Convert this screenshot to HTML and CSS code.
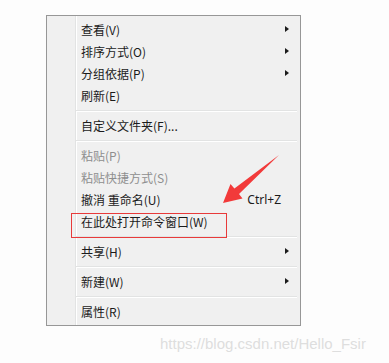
FILE: index.html
```html
<!DOCTYPE html>
<html lang="zh-CN">
<head>
    <meta charset="UTF-8">
    <title>右键菜单</title>
    <link rel="stylesheet" href="styles.css">
</head>
<body>
    <div class="screen">
        <div class="menu">
            <div class="item"><span>查看(V)</span><span class="sub"></span></div>
            <div class="item"><span>排序方式(O)</span><span class="sub"></span></div>
            <div class="item"><span>分组依据(P)</span><span class="sub"></span></div>
            <div class="item"><span>刷新(E)</span></div>
            <div class="sep"></div>
            <div class="item"><span>自定义文件夹(F)...</span></div>
            <div class="sep"></div>
            <div class="item disabled"><span>粘贴(P)</span></div>
            <div class="item disabled"><span>粘贴快捷方式(S)</span></div>
            <div class="item"><span>撤消 重命名(U)</span><span class="shortcut">Ctrl+Z</span></div>
            <div class="item"><span>在此处打开命令窗口(W)</span></div>
            <div class="sep"></div>
            <div class="item"><span>共享(H)</span><span class="sub"></span></div>
            <div class="sep"></div>
            <div class="item"><span>新建(W)</span><span class="sub"></span></div>
            <div class="sep"></div>
            <div class="item"><span>属性(R)</span></div>
        </div>

        <!-- 标注 -->
        <div class="mark-box"></div>
        <svg class="mark-arrow" width="389" height="363" viewBox="0 0 389 363">
            <polygon points="279,155 239,194 242.5,198.5 223,203 230.5,184 234.4,188.6" fill="#f23a3a"/>
        </svg>

        <div class="watermark">https://blog.csdn.net/Hello_Fsir</div>
    </div>
</body>
</html>
```

FILE: styles.css
```css
* {
    box-sizing: border-box;
    margin: 0;
    padding: 0;
}

body {
    background-color: #fdfdfd;
    font-family: "Noto Sans CJK SC", "Microsoft YaHei", sans-serif;
}

.screen {
    position: relative;
    width: 389px;
    height: 363px;
    padding: 15px 0 0 46px;
    overflow: hidden;
}

.menu {
    width: 255px;
    padding: 2px 0 3px;
    border: 1px solid #979797;
    background: linear-gradient(to right,
        #f0f0f0 28px, #e2e3e3 28px, #e2e3e3 29px,
        #ffffff 29px, #ffffff 30px, #f0f0f0 30px);
}

.item {
    display: flex;
    align-items: center;
    justify-content: space-between;
    height: 22px;
    padding: 0 11px 0 34px;
    font-size: 12px;
    color: #1b1b1b;
}

.item.disabled {
    color: #8e8e8e;
}

.sub {
    width: 0;
    height: 0;
    border-left: 4px solid #1b1b1b;
    border-top: 3.5px solid transparent;
    border-bottom: 3.5px solid transparent;
}

.shortcut {
    margin-right: 8px;
    font-family: "Noto Sans", sans-serif;
}

.sep {
    height: 8px;
    margin: 0 3px 0 29px;
    padding-top: 4px;
}

.sep::before {
    content: "";
    display: block;
    height: 1px;
    background-color: #e2e3e3;
    border-bottom: 1px solid #ffffff;
    box-sizing: content-box;
}

.mark-box {
    position: absolute;
    left: 71px;
    top: 213px;
    width: 156px;
    height: 25px;
    border: 1px solid #e83a3a;
}

.mark-arrow {
    position: absolute;
    left: 0;
    top: 0;
}

.watermark {
    position: absolute;
    left: 160px;
    top: 335px;
    font-family: "Liberation Sans", Arial, sans-serif;
    font-size: 15px;
    color: #dedede;
    white-space: nowrap;
}
```
